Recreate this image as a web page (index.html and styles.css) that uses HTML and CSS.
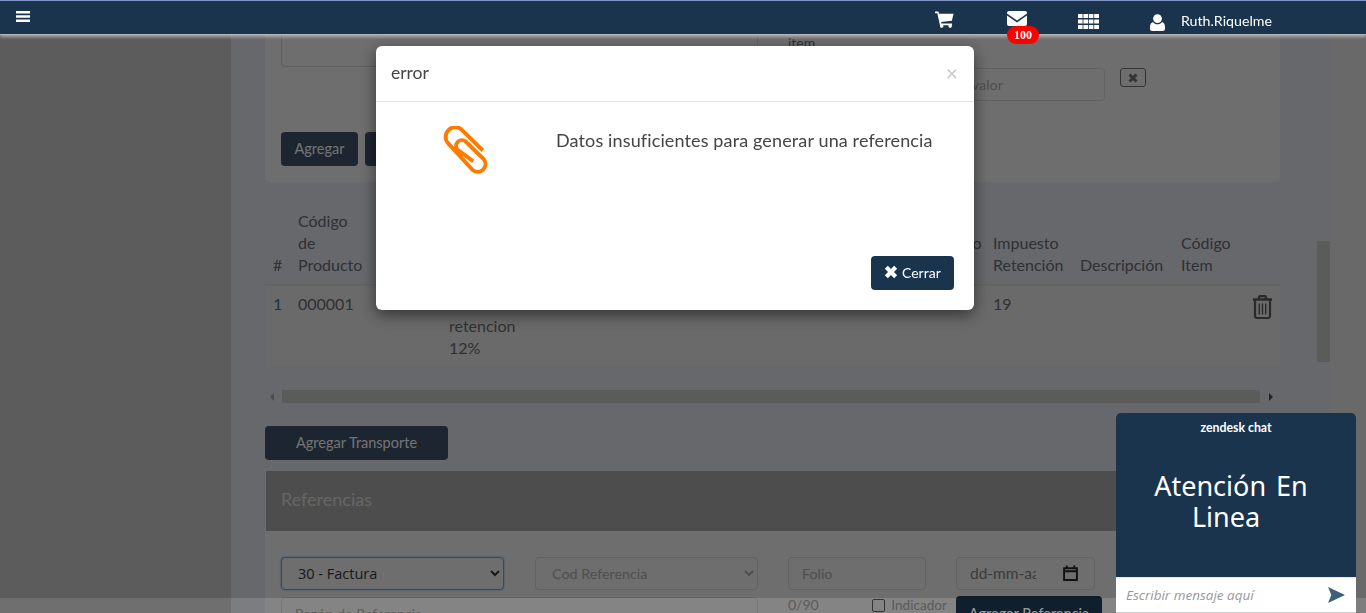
FILE: index.html
```html
<!DOCTYPE html>
<html lang="es">
<head>
  <meta charset="UTF-8">
  <title>Documento</title>
  <link rel="stylesheet" href="styles.css">
</head>
<body>
  <nav class="navbar">
    <svg class="nav-bars" viewBox="0 0 14 11"><path d="M0 0h14v2.4H0zM0 4.3h14v2.4H0zM0 8.6h14V11H0z"/></svg>
    <div class="nav-right">
      <svg class="nav-cart" viewBox="0 0 20 18"><path d="M0 0.6h3.6l.6 2.2H19.6l-1.8 7.6-11.4 1.2.4 1.6h11.2v1.8H5.2L2.4 2.4H0z"/><circle cx="7" cy="16" r="1.9"/><circle cx="16" cy="16" r="1.9"/></svg>
      <div class="nav-mail">
        <svg class="nav-env" viewBox="0 0 20 15"><path d="M2 0h16a2 2 0 0 1 2 2v.6l-10 7-10-7V2a2 2 0 0 1 2-2z"/><path d="M0 4.6l10 6.8 10-6.8V13a2 2 0 0 1-2 2H2a2 2 0 0 1-2-2z"/></svg>
        <span class="badge">100</span>
      </div>
      <svg class="nav-grid" viewBox="0 0 21 15"><path d="M0 0h4.600v4H0zM5.400 0h4.600v4H5.400zM10.800 0h4.600v4h-4.600zM16.200 0H21v4h-4.800zM0 5.500h4.600v4H0zM5.400 5.500h4.600v4H5.400zM10.800 5.500h4.600v4h-4.600zM16.200 5.500H21v4h-4.800zM0 11h4.600v4H0zM5.400 11h4.600v4H5.400zM10.800 11h4.600v4h-4.600zM16.200 11H21v4h-4.800z"/></svg>
      <svg class="nav-user" viewBox="0 0 15 17"><circle cx="7.5" cy="4.6" r="4.4"/><path d="M3 8c1 1.6 2.6 2.3 4.5 2.3S11 9.600 12 8c2 .5 3 2.400 3 5.200V15c0 1.300-1 2-2.200 2H2.200C1 17 0 16.300 0 15v-1.800C0 10.400 1 8.500 3 8z"/></svg>
      <span class="nav-name">Ruth.Riquelme</span>
    </div>
  </nav>

  <div class="page">
    <aside class="sidebar"></aside>

    <main class="content">
      <section class="card">
        <div class="card-top">
          <div class="textarea-box"></div>
          <div class="card-side">
            <span class="side-label">item</span>
            <div class="side-row">
              <input class="field side-input" type="text" placeholder="Ingrese valor">
              <button class="btn-x"><svg viewBox="0 0 10 10"><path d="M1.500 1.500l7 7M8.500 1.500l-7 7"/></svg></button>
            </div>
          </div>
        </div>
        <div class="card-actions">
          <button class="btn btn-muted btn-small">Agregar</button>
          <button class="btn btn-muted btn-small">Limpiar</button>
        </div>
      </section>

      <table class="items">
        <thead>
          <tr>
            <th class="col-num">#</th>
            <th class="col-code">Código de Producto</th>
            <th class="col-desc">Nombre</th>
            <th class="col-a">Cantidad</th>
            <th class="col-b">Precio</th>
            <th class="col-c">Impuesto<br>&nbsp;</th>
            <th class="col-ret">Impuesto Retención</th>
            <th class="col-text">Descripción</th>
            <th class="col-item">Código Item</th>
            <th class="col-del"></th>
          </tr>
        </thead>
        <tbody>
          <tr>
            <td class="num-link">1</td>
            <td>000001</td>
            <td>Producto retencion 12%</td>
            <td></td>
            <td></td>
            <td></td>
            <td>19</td>
            <td></td>
            <td></td>
            <td class="cell-del">
              <svg class="trash" viewBox="0 0 21 24"><path class="trash-solid" d="M1 4.500h19M7 4V2.500C7 1.600 7.700 1 8.500 1h4c.9 0 1.500.6 1.500 1.500V4"/><path d="M3 5v16c0 1.200.8 2 2 2h11c1.200 0 2-.8 2-2V5"/><path class="trash-bar" d="M7.300 8.500v11M10.500 8.500v11M13.700 8.500v11"/></svg>
            </td>
          </tr>
        </tbody>
      </table>

      <div class="hscroll">
        <span class="arrow-left"></span>
        <div class="hscroll-thumb"></div>
        <span class="arrow-right"></span>
      </div>

      <button class="btn btn-muted btn-transport">Agregar Transporte</button>

      <section class="panel">
        <h2 class="panel-head">Referencias</h2>
        <div class="ref-form">
          <select class="field ref-select is-focus"><option>30 - Factura</option></select>
          <select class="field ref-select is-empty"><option>Cod Referencia</option></select>
          <input class="field" type="text" placeholder="Folio">
          <div class="field date-field">
            <span class="date-text">dd-mm-aaaa</span>
            <svg class="date-icon" viewBox="0 0 14 15"><path d="M1 3h12v11H1zM1 5.800h12" /><path d="M3.500 .5v3M10.500 .5v3"/></svg>
          </div>
          <input class="field ref-reason" type="text" placeholder="Razón de Referencia">
          <div class="ref-extra">
            <span>0/90</span>
            <label class="ref-check"><span class="check-box"></span>Indicador</label>
          </div>
          <button class="btn btn-solid btn-ref">Agregar Referencia</button>
        </div>
      </section>
    </main>

    <div class="vscroll"></div>
    <div class="page-edge"></div>
  </div>

  <div class="backdrop"></div>

  <div class="modal">
    <div class="modal-head">
      <span class="modal-title">error</span>
      <span class="modal-close">×</span>
    </div>
    <div class="modal-body">
      <svg class="clip" viewBox="0 0 45 48"><path d="M39 24 18.700 4A9.400 9.400 0 0 0 5.300 17.300L29.300 43.300A7.600 7.600 0 0 0 40 32.700L22 15A5.700 5.700 0 0 0 14 23L29.700 34.700"/></svg>
      <p class="modal-text">Datos insuficientes para generar una referencia</p>
    </div>
    <div class="modal-foot">
      <button class="btn btn-solid btn-close"><svg viewBox="0 0 12 12"><path d="M2 2l8 8M10 2l-8 8"/></svg>Cerrar</button>
    </div>
  </div>

  <div class="chat">
    <div class="chat-brand">zendesk chat</div>
    <div class="chat-title">Atención En Linea&nbsp;</div>
    <div class="chat-input">
      <span>Escribir mensaje aquí</span>
      <svg class="chat-send" viewBox="0 0 18 17"><path d="M0 0 18 8.500 0 17 3.500 8.500z"/></svg>
    </div>
  </div>
</body>
</html>
```

FILE: styles.css
```css
* {
  box-sizing: border-box;
}

html, body {
  height: 613px;
  margin: 0;
  overflow: hidden;
}

body {
  font-family: "Lato", "Open Sans", sans-serif;
  font-size: 16px;
  line-height: 22px;
  color: #606268;
  background-color: #cdd0d8;
}

/* navbar */
.navbar {
  position: relative;
  z-index: 30;
  display: flex;
  align-items: flex-start;
  height: 34px;
  background-color: #1a344e;
  border-top: 1px solid #7f93c4;
  box-shadow: 0 1px 0 #b4b4b4, 0 3px 3px rgba(200, 200, 200, .7);
  fill: #fff;
  color: #fff;
}

.nav-bars {
  width: 14px;
  height: 11px;
  margin: 10px 0 0 16px;
}

.nav-right {
  position: relative;
  display: flex;
  align-items: flex-start;
  margin-left: 905px;
}

.nav-cart {
  width: 19px;
  height: 17px;
  margin-top: 10px;
}

.nav-mail {
  position: relative;
  width: 20px;
  margin: 10px 0 0 53px;
}

.nav-env {
  display: block;
  width: 20px;
  height: 15px;
}

.badge {
  position: absolute;
  top: 15px;
  left: 0;
  width: 32px;
  height: 18px;
  border-radius: 9px;
  background-color: #f00;
  color: #fff;
  font-family: "Liberation Serif", serif;
  font-size: 12px;
  font-weight: bold;
  line-height: 18px;
  text-align: center;
}

.nav-grid {
  width: 21px;
  height: 15px;
  margin: 13px 0 0 51px;
}

.nav-user {
  width: 15px;
  height: 17px;
  margin: 13px 0 0 51px;
}

.nav-name {
  margin: 9px 0 0 16px;
  font-size: 14.200px;
}

/* page */
.page {
  display: flex;
  height: 579px;
}

.sidebar {
  flex: 0 0 231px;
  background-color: #b9b9b9;
}

.content {
  flex: 0 0 1083px;
  padding: 0 34px;
}

.vscroll {
  flex: 0 0 13px;
  height: 121px;
  margin: 207px 0 0 3px;
  background-color: #b6b8b4;
}

.page-edge {
  flex: 1;
  margin-left: 2px;
  background-color: #d2d2d2;
}

/* top card */
.card {
  height: 158px;
  margin-top: -10px;
  padding: 0 16px;
  background-color: #dcdcdc;
  border-radius: 0 0 4px 4px;
}

.card-top {
  display: flex;
}

.textarea-box {
  flex: 0 0 477px;
  height: 43px;
  border: 1px solid #c0c0c0;
  border-top: 0;
  border-radius: 0 0 4px 4px;
}

.card-side {
  flex: 1;
  margin-left: 30px;
  padding-top: 8px;
}

.side-label {
  display: block;
  font-size: 14px;
}

.side-row {
  display: flex;
  align-items: flex-start;
  margin: 14px 0 0 82px;
}

.side-row .side-input {
  width: 235px;
  padding-left: 52px;
}

.btn-x {
  display: flex;
  align-items: center;
  justify-content: center;
  width: 26px;
  height: 19px;
  margin-left: 15px;
  padding: 0;
  border: 1px solid #666;
  border-radius: 3px;
  background: transparent;
}

.btn-x svg {
  width: 10px;
  height: 10px;
  fill: none;
  stroke: #666;
  stroke-width: 3;
}

.card-actions {
  display: flex;
  gap: 7px;
  margin-top: 31px;
}

/* buttons */
.btn {
  height: 34px;
  padding: 0 13px 2px;
  border: 0;
  border-radius: 4px;
  font-family: inherit;
  font-size: 14.500px;
}

.btn-muted {
  background-color: #394a60;
  color: #e6e6e6;
}

.btn-solid {
  background-color: #1a344e;
  color: #fff;
}

.btn-small {
  width: 77px;
}

/* table */
.items {
  width: 1015px;
  margin-top: 25px;
  border-collapse: collapse;
  table-layout: fixed;
}

.items th {
  padding: 3px 8px 8px;
  border-bottom: 2px solid #c4c6ca;
  font-weight: 400;
  text-align: left;
  vertical-align: bottom;
}

.items td {
  height: 82px;
  padding: 7px 8px;
  background-color: #d4d4d4;
  vertical-align: top;
}

.col-num { width: 25px; }
.col-code { width: 151px; }
.col-desc { width: 112px; }
.col-a { width: 178px; }
.col-b { width: 177px; }
.col-c { width: 77px; }
.col-ret { width: 87px; }
.col-text { width: 101px; }
.col-item { width: 70px; }
.col-del { width: 37px; }

.items .col-code {
  padding-right: 75px;
}

.items .num-link {
  color: #2a6aa8;
}

.items .cell-del {
  padding: 9px 0 0 9px;
}

.trash {
  display: block;
  width: 21px;
  height: 24px;
  fill: none;
  stroke: #555;
  stroke-width: 2.200;
}

.trash-solid {
  stroke-width: 2.400;
}

.trash-bar {
  stroke-width: 1.400;
}

/* horizontal scrollbar */
.hscroll {
  display: flex;
  align-items: center;
  height: 13px;
  margin-top: 23px;
}

.hscroll-thumb {
  width: 978px;
  height: 13px;
  margin: 0 6px 0 8px;
  background-color: #b6b8b4;
}

.arrow-left {
  margin-left: 5px;
  border: 4px solid transparent;
  border-right: 4px solid #9a9a9a;
  border-left: 0;
}

.arrow-right {
  border: 4px solid transparent;
  border-left: 4px solid #444;
  border-right: 0;
  margin-left: 3px;
}

.btn-transport {
  display: block;
  width: 183px;
  margin-top: 23px;
}

/* referencias */
.panel {
  margin-top: 11px;
  background-color: #dcdcdc;
}

.panel-head {
  height: 60px;
  margin: 0 0 0 1px;
  padding: 0 15px;
  background-color: #989a98;
  color: #ccc;
  font-size: 18px;
  font-weight: 400;
  line-height: 56px;
}

.ref-form {
  display: grid;
  grid-template-columns: 223px 224px 138px 146px;
  gap: 7px 30px;
  padding: 26px 16px 0;
}

.ref-form > :nth-child(2) {
  margin-left: 1px;
}

.field {
  height: 33px;
  padding: 0 13px 1px;
  border: 1px solid #c4c4c4;
  border-radius: 4px;
  background-color: transparent;
  font-family: inherit;
  font-size: 14.300px;
  color: #444;
}

.field::placeholder {
  color: #9c9c9c;
}

.ref-select.is-focus {
  border-color: #5d94c8;
  box-shadow: 0 0 2px #5d94c8;
  padding-left: 12px;
  font-family: "Open Sans", sans-serif;
  font-size: 14.500px;
  color: #333;
}

.ref-select.is-empty {
  padding-left: 12px;
  color: #9c9c9c;
}

.date-field {
  display: flex;
  align-items: center;
  width: 139px;
  font-size: 15.500px;
  color: #777;
}

.date-text {
  flex: 0 0 66px;
  overflow: hidden;
  white-space: nowrap;
}

.date-icon {
  flex: 0 0 15px;
  height: 16px;
  margin-left: 27px;
  fill: none;
  stroke: #222;
  stroke-width: 1.800;
}

.ref-reason {
  grid-column: 1 / 3;
  width: 477px;
}

.ref-extra {
  display: flex;
  justify-content: space-between;
  margin-top: -3px;
  font-size: 14px;
  color: #999;
}

.ref-check {
  display: flex;
  align-items: center;
  height: 22px;
  margin-right: -21px;
  gap: 6px;
  font-size: 13.600px;
}

.check-box {
  width: 13px;
  height: 13px;
  border: 1px solid #555;
  border-radius: 2px;
}

.btn-ref {
  width: 146px;
  padding: 0;
  margin-top: -1px;
}

/* backdrop over the page, it stops a bit short of the window bottom */
.backdrop {
  position: fixed;
  inset: 0;
  z-index: 10;
  background: linear-gradient(rgba(0, 0, 0, .5) 598px, rgba(0, 0, 0, .4) 598px);
}

/* modal */
.modal {
  position: fixed;
  top: 46px;
  left: 376px;
  z-index: 20;
  display: flex;
  flex-direction: column;
  width: 598px;
  height: 264px;
  border-radius: 6px;
  background-color: #fff;
  box-shadow: 0 5px 15px rgba(0, 0, 0, .5);
  color: #444;
}

.modal-head {
  display: flex;
  align-items: center;
  justify-content: space-between;
  height: 56px;
  padding: 0 16px 2px 15px;
  border-bottom: 1px solid #e5e5e5;
}

.modal-title {
  font-size: 17.500px;
}

.modal-close {
  font-size: 21px;
  color: #c8c8c8;
}

.modal-body {
  flex: 1;
  display: flex;
  padding: 24px 0 0 67px;
}

.clip {
  width: 46px;
  height: 49px;
  fill: none;
  stroke: #ff7a00;
  stroke-width: 3.800;
}

.modal-text {
  margin: 3px 0 0 67px;
  font-size: 18px;
  letter-spacing: .13px;
}

.modal-foot {
  display: flex;
  justify-content: flex-end;
  padding: 0 20px 20px;
}

.btn-close {
  display: flex;
  align-items: center;
  gap: 4px;
  width: 83px;
  padding: 0 13px 2px;
  font-size: 14px;
}

.btn-close svg {
  width: 14px;
  height: 14px;
  fill: none;
  stroke: #fff;
  stroke-width: 3.600;
}

/* chat */
.chat {
  position: fixed;
  right: 10px;
  bottom: 0;
  z-index: 40;
  display: flex;
  flex-direction: column;
  width: 240px;
  height: 200px;
  border-radius: 5px 5px 0 0;
  background-color: #1a344e;
  color: #fff;
}

.chat-brand {
  padding-top: 8px;
  font-size: 12.300px;
  font-weight: 700;
  line-height: 14px;
  text-align: center;
}

.chat-title {
  flex: 1;
  padding: 35px 32px 0 22px;
  font-family: "Noto Sans", sans-serif;
  font-size: 27px;
  line-height: 31px;
  text-align: center;
  word-spacing: 3px;
}

.chat-input {
  display: flex;
  align-items: center;
  justify-content: space-between;
  height: 36px;
  padding: 0 11px 0 10px;
  border-top: 1px solid #e8e8e8;
  border-bottom: 1px solid #ccc;
  background-color: #fff;
  color: #999;
  font-family: "Open Sans", sans-serif;
  font-size: 13.500px;
  font-style: italic;
}

.chat-send {
  width: 17px;
  height: 16px;
  fill: #3f5f7a;
}
```
